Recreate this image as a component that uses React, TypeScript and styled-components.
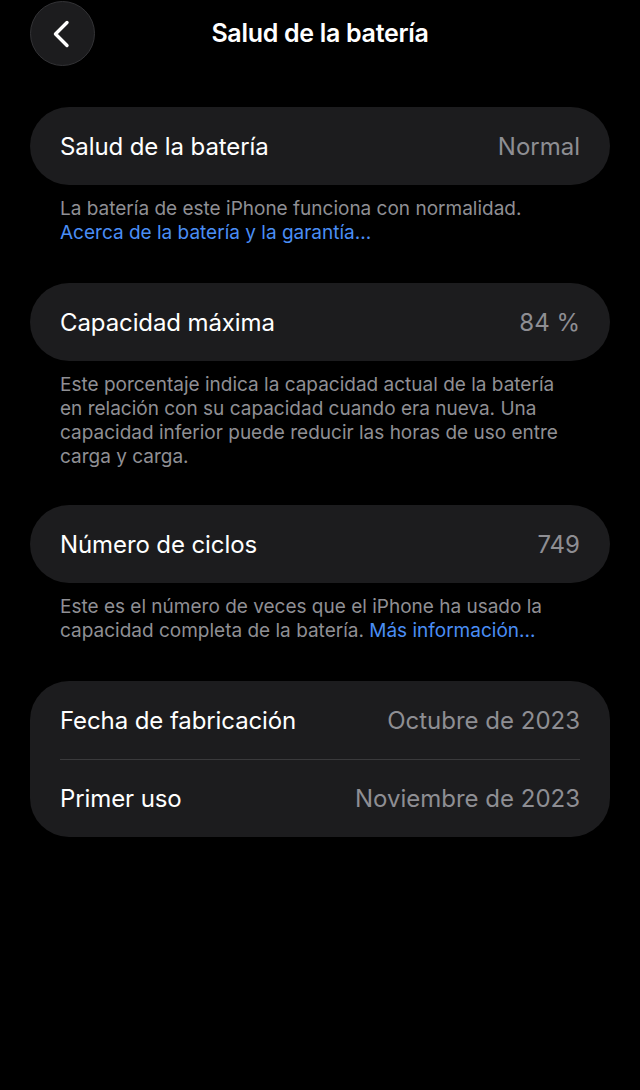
import React from "react";
import styled, { createGlobalStyle } from "styled-components";

const GlobalStyle = createGlobalStyle`
  html, body {
    margin: 0;
    padding: 0;
    background: #000;
  }
  body {
    font-family: Inter, "Noto Sans", "Liberation Sans", sans-serif;
    -webkit-font-smoothing: antialiased;
  }
`;

type Row = { label: string; value: string };

const App: React.FC = () => {
  return (
    <Page>
      <GlobalStyle />
      <Header>
        <BackButton aria-label="Atrás">
          <svg width="18" height="28" viewBox="0 0 18 28" fill="none">
            <path
              d="M15 2.5L3.5 14L15 25.5"
              stroke="#fff"
              strokeWidth="3.4"
              strokeLinecap="round"
              strokeLinejoin="round"
            />
          </svg>
        </BackButton>
        <Title>Salud de la batería</Title>
      </Header>

      <Content>
        <Card rows={[{ label: "Salud de la batería", value: "Normal" }]} />
        <Footnote>
          La batería de este iPhone funciona con normalidad.
          <br />
          <Link>Acerca de la batería y la garantía...</Link>
        </Footnote>

        <Card rows={[{ label: "Capacidad máxima", value: "84 %" }]} />
        <Footnote gap={36}>
          Este porcentaje indica la capacidad actual de la batería en relación
          con su capacidad cuando era nueva. Una capacidad inferior puede
          reducir las horas de uso entre carga y carga.
        </Footnote>

        <Card rows={[{ label: "Número de ciclos", value: "749" }]} />
        <Footnote>
          Este es el número de veces que el iPhone ha usado la capacidad
          completa de la batería. <Link>Más información...</Link>
        </Footnote>

        <Card
          rows={[
            { label: "Fecha de fabricación", value: "Octubre de 2023" },
            { label: "Primer uso", value: "Noviembre de 2023" },
          ]}
        />
      </Content>
    </Page>
  );
};

const Card: React.FC<{ rows: Row[] }> = ({ rows }) => (
  <Group>
    {rows.map((r, i) => (
      <ListRow key={r.label} divided={i > 0}>
        <Label>{r.label}</Label>
        <Value>{r.value}</Value>
      </ListRow>
    ))}
  </Group>
);

// Styled Components
const Page = styled.div`
  width: 640px;
  min-height: 1090px;
  background: #000;
  color: #fff;
`;

const Header = styled.div`
  position: relative;
  height: 66px;
  display: flex;
  align-items: center;
  justify-content: center;
`;

const BackButton = styled.button`
  position: absolute;
  left: 30px;
  top: 1px;
  width: 65px;
  height: 65px;
  border-radius: 50%;
  background: #1c1c1e;
  border: 1px solid #333336;
  display: flex;
  align-items: center;
  justify-content: center;
  padding: 0 4px 0 0;
  cursor: pointer;
  box-sizing: border-box;
`;

const Title = styled.h1`
  margin: 0;
  font-size: 25px;
  font-weight: 600;
  letter-spacing: -0.3px;
  color: #fff;
`;

const Content = styled.div`
  padding: 41px 30px 0;
  display: flex;
  flex-direction: column;
`;

const Group = styled.div`
  background: #1c1c1e;
  border-radius: 39px;
  padding: 0 30px;
`;

const ListRow = styled.div<{ divided: boolean }>`
  height: 78px;
  display: flex;
  align-items: center;
  justify-content: space-between;
  border-top: ${(p) => (p.divided ? "1px solid #3a3a3c" : "none")};
  box-sizing: border-box;
`;

const Label = styled.span`
  font-size: 24px;
  color: #fff;
  letter-spacing: -0.1px;
`;

const Value = styled.span`
  font-size: 24px;
  color: #8e8e93;
`;

const Footnote = styled.p<{ gap?: number }>`
  margin: 0;
  padding: 12px 30px ${(p) => p.gap ?? 38}px;
  font-size: 19px;
  line-height: 24px;
  color: #8f8f94;
`;

const Link = styled.span`
  color: #4a8ef5;
`;

export default App;
